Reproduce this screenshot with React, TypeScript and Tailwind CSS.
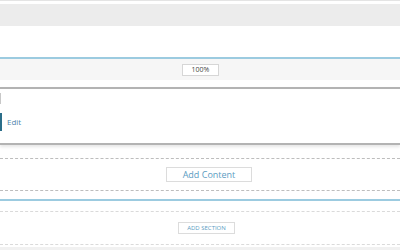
export default function App() {
  return (
    <div
      className="w-[400px] h-[250px] overflow-hidden bg-white flex flex-col"
      style={{ fontFamily: '"Open Sans", "Noto Sans", sans-serif' }}
    >
      {/* top bar */}
      <div className="h-[4px] shrink-0 border-t border-[#e4e4e4] bg-white" />
      <div className="h-[22px] shrink-0 bg-[#ececec]" />
      <div className="h-[31px] shrink-0 bg-white" />

      {/* zoom strip */}
      <div className="h-[2px] shrink-0 bg-[#9ccbe0]" />
      <div className="h-[21px] shrink-0 bg-[#f6f6f6] flex items-center justify-center">
        <div className="w-[37px] h-[12px] ml-[1px] border border-[#d6d6d6] bg-white flex items-center justify-center text-[7px] text-[#444] leading-none">
          100%
        </div>
      </div>
      <div className="h-[7px] shrink-0 bg-white" />

      {/* content card */}
      <div className="h-[58px] shrink-0 border-y-2 border-[#b3b3b3] bg-white flex flex-col shadow-[0_2px_3px_rgba(0,0,0,0.1)]">
        <div className="h-[11px] mt-[4px] w-[2px] border-l border-[#c8c8c8]" />
        <div className="mt-[9px] flex items-center gap-[5px] h-[18px]">
          <div className="w-[2px] h-full bg-[#2b6e89]" />
          <span className="text-[8px] text-[#4f86ad] leading-none">Edit</span>
        </div>
      </div>

      {/* add content row */}
      <div className="h-[13px] shrink-0" />
      <div className="h-[33px] shrink-0 border-y border-dashed border-[#bdbdbd] flex items-center justify-center">
        <button className="w-[86px] h-[15px] ml-[18px] border border-[#dcdcdc] bg-white text-[9px] text-[#5b9cc2] leading-none">
          Add Content
        </button>
      </div>

      {/* section separator */}
      <div className="h-[8px] shrink-0" />
      <div className="h-[2px] shrink-0 bg-[#9ccbe0]" />
      <div className="h-[10px] shrink-0" />

      {/* add section row */}
      <div className="h-[34px] shrink-0 border-y border-dashed border-[#dadada] flex items-center justify-center">
        <button className="w-[57px] h-[12px] ml-[13px] border border-[#dcdcdc] bg-white text-[6px] text-[#5b9cc2] leading-none uppercase">
          Add Section
        </button>
      </div>
      <div className="h-[2px] shrink-0 bg-white" />
      <div className="flex-1 bg-[#f1f1f1]" />
    </div>
  );
}
